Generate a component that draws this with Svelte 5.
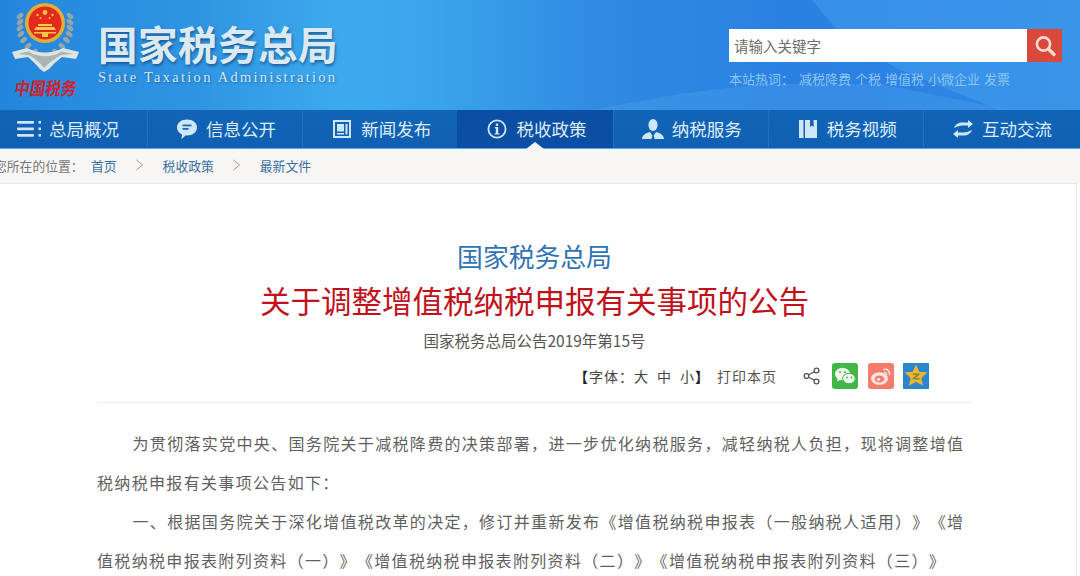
<script>
  const navItems = [
    { label: '总局概况', icon: 'menu' },
    { label: '信息公开', icon: 'chat' },
    { label: '新闻发布', icon: 'news' },
    { label: '税收政策', icon: 'info', active: true },
    { label: '纳税服务', icon: 'user' },
    { label: '税务视频', icon: 'book' },
    { label: '互动交流', icon: 'swap' }
  ];
  const crumbs = ['首页', '税收政策', '最新文件'];
  const wheat = [0, 1, 2, 3, 4, 5, 6];
</script>

<div class="page">
  <header class="head">
    <svg class="bands" width="1080" height="110" viewBox="0 0 1080 110" aria-hidden="true">
      <polygon points="812,0 1080,0 1080,110 1000,110 900,70 845,40" fill="#4aa8ee" opacity="0.42" />
      <polygon points="590,110 680,94 760,84 880,84 1010,110" fill="#52a8ee" opacity="0.3" />
    </svg>
    <div class="brand">
      <div class="logo">
        <svg class="emblem" width="68" height="72" viewBox="0 0 68 72">
          <g fill="#97a5a8">
            {#each wheat as i}
              <ellipse cx={8 + (i > 2 ? (i - 2) * (i - 2) * 0.9 : 0)} cy={13 + i * 6} rx="3.800" ry="2.300" transform="rotate(-40 {8 + (i > 2 ? (i - 2) * (i - 2) * 0.9 : 0)} {13 + i * 6})" />
              <ellipse cx={58 - (i > 2 ? (i - 2) * (i - 2) * 0.9 : 0)} cy={13 + i * 6} rx="3.800" ry="2.300" transform="rotate(40 {58 - (i > 2 ? (i - 2) * (i - 2) * 0.9 : 0)} {13 + i * 6})" />
            {/each}
          </g>
          <circle cx="33" cy="20" r="20" fill="#e2ad38" />
          <circle cx="33" cy="20" r="16.500" fill="#e32a1c" />
          <g fill="#f2c94a">
            <circle cx="33" cy="9.500" r="2.400" />
            <circle cx="25.500" cy="12" r="1.200" />
            <circle cx="28.500" cy="15" r="1" />
            <circle cx="37.500" cy="15" r="1" />
            <circle cx="40.500" cy="12" r="1.200" />
            <path d="M26 21h14v2H26z" />
            <path d="M24 24h18l2 3H22z" />
            <path d="M22 29h22v1.500H22z" />
            <path d="M30 30h6v4h-6z" />
          </g>
          <path d="M0 49 L15 45 Q33 54 51 45 L67 49 L64 56 L50 54 Q42 60 37 66 L32 69 L28 66 Q23 60 16 54 L3 56 Z" fill="#dde4e2" />
          <path d="M6 51 L16 48.500 Q33 58 50 48.500 L61 51 L49 52 Q37 59 32 65 Q28 59 17 52 Z" fill="#a9b5b3" />
        </svg>
        <div class="seal">中国税务</div>
      </div>
      <div class="brand-text">
        <div class="cn-name">国家税务总局</div>
        <div class="en-name">State Taxation Administration</div>
      </div>
    </div>
    <div class="search-area">
      <div class="search">
        <div class="field">请输入关键字</div>
        <div class="go">
          <svg width="24" height="24" viewBox="0 0 24 24" fill="none" stroke="#f6dcd4">
            <circle cx="10.500" cy="10" r="6.600" stroke-width="2.600" />
            <path d="M15.500 15 L21 20.500" stroke-width="3.400" stroke-linecap="round" />
          </svg>
        </div>
      </div>
      <div class="hot">
        <span class="hot-title">本站热词：</span>
        <span>减税降费</span><span>个税</span><span>增值税</span><span>小微企业</span><span>发票</span>
      </div>
    </div>
  </header>

  <nav class="nav">
    {#each navItems as item, n}
      <div class="nav-item" class:active={item.active} class:first={n === 0}>
        <svg class="nav-icon" width="26" height="22" viewBox="0 0 26 22" fill="#cfe6f8">
          {#if item.icon === 'menu'}
            <rect x="1" y="3" width="17" height="2.800" rx="1" />
            <rect x="1" y="9.500" width="17" height="2.800" rx="1" />
            <rect x="1" y="16" width="17" height="2.800" rx="1" />
            <rect x="22.500" y="3" width="2.500" height="2.600" />
            <rect x="22.500" y="9.500" width="2.500" height="2.600" />
            <rect x="22.500" y="16" width="2.500" height="2.600" />
          {:else if item.icon === 'chat'}
            <path d="M13 1.500c5.800 0 10 3.500 10 8s-4.200 8-10 8c-.6 0-1.200 0-1.800-.1-.8 1.400-2.400 2.900-4.200 3.400.8-1.200 1.100-2.600 1-4.200-3-1.400-5-4-5-7.100 0-4.500 4.200-8 10-8z" />
            <rect x="8.500" y="6.500" width="9" height="1.800" fill="#1b68b6" />
            <rect x="8.500" y="10" width="6" height="1.800" fill="#1b68b6" />
          {:else if item.icon === 'news'}
            <path fill-rule="evenodd" d="M4 2h18v18H4zM6 4v14h14V4z" />
            <rect x="8" y="6" width="7" height="7.500" />
            <rect x="8" y="15" width="7" height="1.500" />
            <rect x="16.500" y="6" width="2" height="10.500" />
          {:else if item.icon === 'info'}
            <path fill-rule="evenodd" d="M13 1.500a9.500 9.500 0 1 1 0 19 9.500 9.500 0 0 1 0-19zm0 1.800a7.700 7.700 0 1 0 0 15.400 7.700 7.700 0 0 0 0-15.400z" />
            <rect x="11.800" y="5.500" width="2.400" height="2.400" />
            <path d="M10.800 9h3.400v6.200h1.200v1.300h-4.800v-1.300h1.200v-4.900h-1z" />
          {:else if item.icon === 'user'}
            <ellipse cx="13" cy="7" rx="4.600" ry="6" />
            <path d="M2 21c.5-4 3.500-6 8-7l2.300 3.500L11.500 21zM24 21c-.5-4-3.500-6-8-7l-2.300 3.500.8 3.500z" />
          {:else if item.icon === 'book'}
            <rect x="4" y="2" width="4.500" height="18" />
            <path d="M10 2h5v7l1.800-1.500L18.600 9V2H22v18H10z" />
          {:else}
            <path d="M4 10c1-3.500 4.500-5.500 8.500-5.500H18V2l5 4-5 4V7.500h-5.500c-3 0-5.500 1-8.500 2.500z" />
            <path d="M22 12c-1 3.500-4.500 5.500-8.500 5.500H8V20l-5-4 5-4v2.500h5.500c3 0 5.500-1 8.500-2.500z" />
          {/if}
        </svg>
        <span class="nav-label">{item.label}</span>
        {#if item.active}<i class="caret"></i>{/if}
      </div>
    {/each}
  </nav>

  <div class="crumbs">
    <span class="where">您所在的位置：</span>
    {#each crumbs as c, i}
      <span class="crumb">{c}</span>
      {#if i < crumbs.length - 1}
        <svg class="chev" width="9" height="12" viewBox="0 0 9 12" fill="none" stroke="#9a9a9a"><path d="M1.500 1 L7.500 6 L1.500 11" /></svg>
      {/if}
    {/each}
  </div>

  <main class="card">
    <h2 class="org">国家税务总局</h2>
    <h1 class="title">关于调整增值税纳税申报有关事项的公告</h1>
    <p class="doc-no">国家税务总局公告2019年第15号</p>

    <div class="tools">
      <span class="font-size"><b>【</b>字体：<span class="size">大</span><span class="size">中</span><span class="size last">小</span><b>】</b></span>
      <span class="print">打印本页</span>
      <svg class="share" width="18" height="18" viewBox="0 0 18 18" fill="none" stroke="#555" stroke-width="1.300">
        <circle cx="13.500" cy="3.500" r="2.400" />
        <circle cx="3.500" cy="9" r="2.400" />
        <circle cx="13.500" cy="14.500" r="2.400" />
        <path d="M5.600 7.800 L11.400 4.700 M5.600 10.200 L11.400 13.300" />
      </svg>
      <svg class="social" width="26" height="26" viewBox="0 0 26 26">
        <rect width="26" height="26" rx="3" fill="#43b649" />
        <ellipse cx="10.500" cy="11" rx="7.500" ry="6.300" fill="#eef8ec" />
        <path d="M6 15l-1 3.500 4-2z" fill="#eef8ec" />
        <ellipse cx="17" cy="15.500" rx="6.300" ry="5.200" fill="#eef8ec" stroke="#43b649" stroke-width="1" />
        <circle cx="8" cy="9" r="1" fill="#43b649" />
        <circle cx="13" cy="9" r="1" fill="#43b649" />
        <circle cx="15" cy="14.500" r=".9" fill="#43b649" />
        <circle cx="19.500" cy="14.500" r=".9" fill="#43b649" />
      </svg>
      <svg class="social" width="26" height="26" viewBox="0 0 26 26">
        <rect width="26" height="26" rx="3" fill="#f47c6c" />
        <ellipse cx="11.500" cy="15.500" rx="8.500" ry="6.300" fill="#fbe6e0" />
        <ellipse cx="11.500" cy="16" rx="4.800" ry="3.600" fill="#f47c6c" />
        <circle cx="10.500" cy="16.300" r="1.600" fill="#fbe6e0" />
        <path d="M16 6.500c3.500-1 6 1.500 5.500 5" fill="none" stroke="#fbe6e0" stroke-width="1.600" stroke-linecap="round" />
        <path d="M16.500 9.500c1.500-.3 2.500.7 2.300 2" fill="none" stroke="#fbe6e0" stroke-width="1.300" stroke-linecap="round" />
      </svg>
      <svg class="social" width="26" height="26" viewBox="0 0 26 26">
        <rect width="26" height="26" rx="1" fill="#2a86cf" />
        <path d="M13 1.500l3.300 7.300 8 .8-6 5.300 1.800 7.900-7.100-4.100-7.100 4.100 1.800-7.900-6-5.300 8-.8z" fill="#f4b52c" />
        <path d="M10 10.500h6.500v1.300l-4 3.200h4v1.500H9.500v-1.300l4-3.200H10z" fill="#7d8c3a" />
      </svg>
    </div>

    <div class="content">
      <p class="indent">为贯彻落实党中央、国务院关于减税降费的决策部署，进一步优化纳税服务，减轻纳税人负担，现将调整增值税纳税申报有关事项公告如下：</p>
      <p class="indent">一、根据国务院关于深化增值税改革的决定，修订并重新发布《增值税纳税申报表（一般纳税人适用）》《增值税纳税申报表附列资料（一）》《增值税纳税申报表附列资料（二）》《增值税纳税申报表附列资料（三）》</p>
    </div>
  </main>
</div>

<style>
  :global(body) {
    margin: 0;
    background: #fff;
  }
  .page {
    width: 1080px;
    height: 576px;
    overflow: hidden;
    font-family: "Noto Sans CJK SC", "Liberation Sans", sans-serif;
  }
  .head {
    position: relative;
    height: 110px;
    box-sizing: border-box;
    display: flex;
    justify-content: space-between;
    padding: 0 18px 0 12px;
    background: linear-gradient(90deg, #2386dc 0%, #2f95e2 18%, #3daaee 32%, #3aa4ec 40%, #2f8ae2 56%, #2b80e2 74%, #2f88e4 100%);
  }
  .bands {
    position: absolute;
    left: 0;
    top: 0;
  }
  .brand,
  .search-area {
    position: relative;
  }
  .brand {
    display: flex;
    gap: 18px;
  }
  .logo {
    width: 68px;
    padding-top: 3px;
    display: flex;
    flex-direction: column;
    align-items: center;
  }
  .emblem {
    display: block;
  }
  .seal {
    margin-top: 2px;
    width: 68px;
    text-align: center;
    font-size: 15.500px;
    line-height: 20px;
    font-weight: 700;
    color: #d3202a;
    white-space: nowrap;
    transform: skewX(-10deg) scaleY(1.150);
  }
  .brand-text {
    padding-top: 21px;
  }
  .cn-name {
    font-size: 39.500px;
    line-height: 44px;
    letter-spacing: 0.500px;
    font-weight: 700;
    color: #dbe9f2;
    text-shadow: 1px 2px 3px rgba(15, 60, 110, 0.65);
    white-space: nowrap;
  }
  .en-name {
    font-family: "Liberation Serif", serif;
    font-size: 14.500px;
    line-height: 18px;
    margin-top: 3px;
    letter-spacing: 2.270px;
    color: #d4e6f3;
    text-shadow: 1px 1px 2px rgba(15, 60, 110, 0.5);
    white-space: nowrap;
  }
  .search-area {
    width: 333px;
    padding-top: 29px;
  }
  .search {
    display: flex;
    height: 33px;
  }
  .field {
    flex: 1;
    background: #fff;
    padding-left: 5px;
    font-size: 14.500px;
    line-height: 33px;
    color: #6b6b6b;
  }
  .go {
    width: 35px;
    background: #d9483a;
    display: flex;
    align-items: center;
    justify-content: center;
  }
  .hot {
    margin-top: 7px;
    display: flex;
    gap: 4px;
    font-size: 13px;
    line-height: 20px;
    color: #8cc6f2;
    white-space: nowrap;
  }
  .hot-title {
    width: 66px;
  }
  .nav {
    height: 39px;
    box-sizing: border-box;
    display: flex;
    background: linear-gradient(180deg, #1264b6, #0f60b2);
    border-bottom: 1px solid #57a9e8;
  }
  .nav-item {
    position: relative;
    flex: 0 0 155.200px;
    box-sizing: border-box;
    display: flex;
    align-items: center;
    justify-content: center;
    gap: 6px;
    border-left: 1px solid #2170bd;
    color: #dcecf9;
  }
  .nav-item.first {
    flex-basis: 147px;
    border-left: 0;
    justify-content: flex-start;
    padding-left: 16px;
    gap: 7px;
  }
  .nav-item.active {
    background: #0a4fa3;
    border-left-color: #0a4fa3;
  }
  .nav-icon {
    flex: none;
  }
  .nav-label {
    font-size: 17.500px;
    line-height: 38px;
    white-space: nowrap;
  }
  .caret {
    position: absolute;
    left: 68px;
    bottom: -1px;
    width: 0;
    height: 0;
    border-left: 9px solid transparent;
    border-right: 9px solid transparent;
    border-bottom: 7px solid #f2f6f9;
  }
  .crumbs {
    height: 34px;
    box-sizing: border-box;
    display: flex;
    align-items: center;
    margin-left: -6px;
    padding-bottom: 2px;
    background: #f7f6f4;
    font-size: 12.800px;
    color: #777;
    white-space: nowrap;
  }
  .where {
    width: 97px;
  }
  .crumb {
    color: #3a6ea5;
  }
  .chev {
    margin: 0 18.500px;
  }
  .card {
    width: 1077px;
    box-sizing: border-box;
    height: 393px;
    border-top: 1px solid #e6e6e6;
    border-right: 1px solid #e6e6e6;
    padding: 0 104px 0 97px;
  }
  .org {
    margin: 57px 0 0;
    font-size: 25.800px;
    line-height: 30px;
    font-weight: 400;
    text-align: center;
    color: #2f73b5;
    white-space: nowrap;
  }
  .title {
    margin: 9px 0 0;
    font-size: 30.500px;
    line-height: 40px;
    font-weight: 400;
    text-align: center;
    color: #c1121c;
    white-space: nowrap;
  }
  .doc-no {
    margin: 8px 0 0;
    font-size: 15.500px;
    line-height: 24px;
    text-align: center;
    color: #555;
  }
  .tools {
    margin-top: 3px;
    height: 48px;
    padding: 0 43px 6px 0;
    box-sizing: border-box;
    border-bottom: 1px solid #efefef;
    display: flex;
    justify-content: flex-end;
    align-items: center;
    font-size: 14px;
    color: #555;
    white-space: nowrap;
  }
  .font-size {
    letter-spacing: 1px;
    color: #444;
  }
  .font-size b {
    font-weight: 700;
    color: #222;
  }
  .size {
    margin-right: 8px;
  }
  .size.last {
    margin-right: 0;
  }
  .print {
    margin: 0 26px 0 7px;
    letter-spacing: 1px;
  }
  .share {
    margin-right: 11px;
  }
  .social {
    margin-left: 9.500px;
    display: block;
  }
  .share + .social {
    margin-left: 0;
  }
  .content {
    margin-top: 21px;
    font-size: 16px;
    line-height: 39px;
    letter-spacing: 1.330px;
    color: #5f5f5f;
    text-spacing-trim: space-all;
  }
  .content p {
    margin: 0;
  }
  .indent {
    text-indent: 2.220em;
  }
</style>
